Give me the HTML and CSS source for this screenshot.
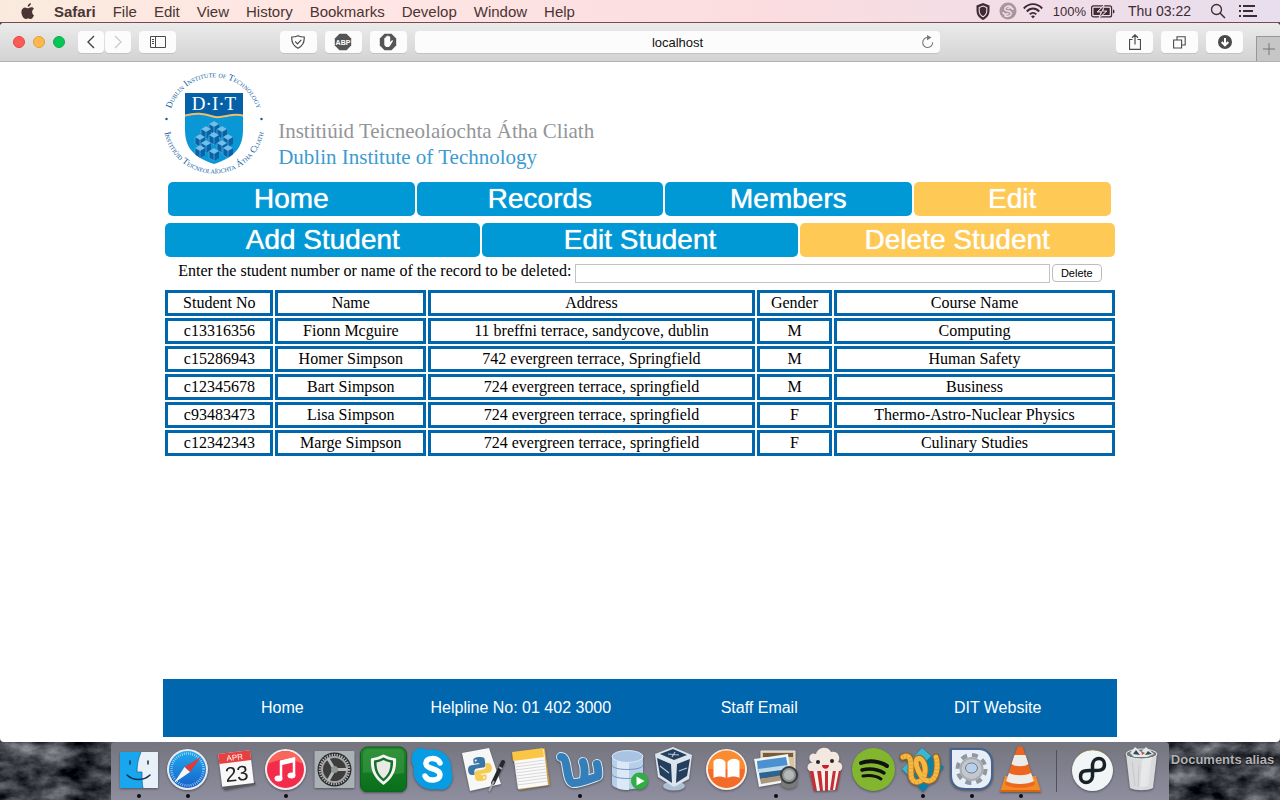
FILE: index.html
```html
<!DOCTYPE html>
<html lang="en">
<head>
<meta charset="utf-8">
<title>Delete Student</title>
<link rel="stylesheet" href="styles.css">
</head>
<body>
<header class="menubar">
  <nav class="menus">
    <svg class="apple" width="14" height="17" viewBox="0 0 14 17"><path fill="#4b3433" d="M9.900 0C10 1.900 8.500 3.700 6.700 3.800 6.500 2.100 8.100.3 9.900 0zM13 12.200c-.9 2.200-2 3.800-3.300 3.800-1 0-1.300-.6-2.500-.6s-1.600.6-2.500.6C2.600 16 .4 12.200.4 9c0-3 1.900-4.600 3.700-4.600 1.200 0 2.100.8 2.900.8.700 0 1.800-.9 3.300-.9 1.100 0 2 .5 2.600 1.400-2.500 1.500-2.100 5.200.1 6.500z"/></svg>
    <button class="menu menu-app">Safari</button>
    <button class="menu">File</button>
    <button class="menu">Edit</button>
    <button class="menu">View</button>
    <button class="menu">History</button>
    <button class="menu">Bookmarks</button>
    <button class="menu">Develop</button>
    <button class="menu">Window</button>
    <button class="menu">Help</button>
  </nav>
  <div class="status">
    <svg width="14" height="17" viewBox="0 0 14 17"><path fill="#3e2a33" d="M7 0l6.500 2.500v5C13.500 12 11 15 7 17 3 15 .5 12 .5 7.500v-5z"/><path fill="none" stroke="#f2dde3" stroke-width="1.100" d="M7 3l3.800 1.500v3.300c0 2.600-1.500 4.700-3.800 6-2.300-1.300-3.800-3.400-3.800-6V4.500z"/></svg>
    <svg width="18" height="18" viewBox="0 0 18 18"><circle cx="9" cy="9" r="8.500" fill="#a8959d"/><path fill="none" stroke="#f2e0e6" stroke-width="1.500" d="M12.500 5C10 3.500 7 4 6 6s1 3 3 3 4 1.500 3 3.500-4 2.500-6.500 1M14 8c0-3-5-2.500-5.500-1M4 10c0 3 5 2.500 5.500 1"/></svg>
    <svg class="wifi" width="20" height="16" viewBox="0 0 20 16"><g fill="none" stroke="#3e2a33" stroke-width="1.900"><path d="M.8 5.500C6-.3 14-.3 19.200 5.500M3.800 8.500c3.600-4 8.800-4 12.400 0M6.800 11.400c1.800-2 4.600-2 6.400 0"/></g><path fill="#3e2a33" d="M10 15.500l-2-2.300c1.200-1.100 2.800-1.100 4 0z"/></svg>
    <span class="charge">100%</span>
    <svg class="battery" width="24" height="13" viewBox="0 0 24 13"><rect x=".6" y=".9" width="20" height="11" rx="2" fill="none" stroke="#3e2a33" stroke-width="1.200"/><rect x="2.500" y="2.800" width="16.200" height="7.200" fill="#3e2a33"/><path fill="#3e2a33" d="M22 4.500c2 .5 2 3.500 0 4z"/><path fill="#f0dde4" stroke="#f0dde4" stroke-width=".8" d="M13 0L6 7h4l-2 6 8-7h-4z"/><path fill="#3e2a33" d="M12.600 1.500L7.500 6.300h4L9 11.500 14.500 6.600h-4z"/></svg>
    <span class="clock">Thu 03:22</span>
    <svg class="search" width="16" height="16" viewBox="0 0 16 16"><circle cx="6.500" cy="6.500" r="5" fill="none" stroke="#3e2a33" stroke-width="1.300"/><path stroke="#3e2a33" stroke-width="1.500" d="M10 10l5 5"/></svg>
    <svg width="18" height="12" viewBox="0 0 18 12"><path stroke="#3e2a33" stroke-width="2" d="M0 1h2M4 1h12M0 6h2M4 6h10M0 11h2M4 11h14"/></svg>
  </div>
</header>

<div class="window">
  <div class="toolbar">
    <div class="tools-left">
      <button class="light red" aria-label="Close"></button>
      <button class="light amber" aria-label="Minimise"></button>
      <button class="light green" aria-label="Zoom"></button>
      <div class="pair">
        <button class="tool narrow" aria-label="Back"><svg width="8" height="14" viewBox="0 0 8 14"><path fill="none" stroke="#444" stroke-width="1.400" d="M7 1L1 7l6 6"/></svg></button>
        <button class="tool narrow" aria-label="Forward"><svg width="8" height="14" viewBox="0 0 8 14"><path fill="none" stroke="#c8c8c8" stroke-width="1.200" d="M1 1l6 6-6 6"/></svg></button>
      </div>
      <button class="tool sidebar" aria-label="Sidebar"><svg width="16" height="12" viewBox="0 0 16 12"><path fill="none" stroke="#4a4a4a" d="M.5.5h15v11H.5zM5.500.5v11M2 3.500h2M2 5.500h2M2 7.500h2"/></svg></button>
    </div>
    <div class="tools-middle">
      <button class="tool" aria-label="Protection"><svg width="14" height="14" viewBox="0 0 14 14"><path fill="none" stroke="#4a4a4a" stroke-width="1.200" d="M7 .7c2 1 4 1.300 6.200 1.300.4 5-1.200 8.800-6.200 11.300C2 10.800.4 7 .8 2 3 2 5 1.700 7 .7zM4.200 6.500l2.300 2.300 3.800-4"/></svg></button>
      <button class="tool" aria-label="Ad block"><svg width="18" height="18" viewBox="0 0 18 18"><path fill="#555" d="M5.500.8h7l4.700 4.700v7l-4.700 4.700h-7L.8 12.500v-7z"/><text x="9" y="11.500" text-anchor="middle" class="abp">ABP</text></svg></button>
      <button class="tool" aria-label="Block content"><svg width="18" height="18" viewBox="0 0 18 18"><path fill="#555" d="M5.500.8h7l4.700 4.700v7l-4.700 4.700h-7L.8 12.500v-7z"/><path fill="#fff" d="M5.300 5.500c0-1 1.300-1 1.300 0V4c0-1 1.500-1 1.500 0v-.8c0-1 1.600-1 1.600 0V4c0-1 1.500-1 1.500 0v5l1.500-1.600c1-.6 1.600.2 1 1l-2.600 4.400c-1.200 2.200-5.800 1.600-5.800-1.500z"/></svg></button>
      <div class="address">
        <input class="url" type="text" value="localhost" aria-label="Address">
        <button class="reload" aria-label="Reload"><svg width="13" height="14" viewBox="0 0 13 14"><path fill="none" stroke="#777" stroke-width="1.100" d="M7 2.500a5 5 0 1 0 4.700 4.700"/><path fill="#777" d="M6 0l4.500 2.600L6 5.200z"/></svg></button>
      </div>
    </div>
    <div class="tools-right">
      <button class="tool" aria-label="Share"><svg width="12" height="16" viewBox="0 0 12 16"><path fill="none" stroke="#4a4a4a" stroke-width="1.200" d="M3.500 5.500h-3v9.800h11V5.500h-3M6 10.500V1M3 3.800L6 .9l3 2.900"/></svg></button>
      <button class="tool" aria-label="Tabs"><svg width="13" height="13" viewBox="0 0 13 13"><path fill="none" stroke="#4a4a4a" stroke-width="1.100" d="M.6 4h8v8h-8zM4 4V.8h8.200V9H9"/></svg></button>
      <button class="tool" aria-label="Downloads"><svg width="14" height="14" viewBox="0 0 14 14"><circle cx="7" cy="7" r="7" fill="#4a4a4a"/><path fill="none" stroke="#fff" stroke-width="2" d="M7 3v7M3.700 7L7 10.300 10.300 7"/></svg></button>
      <button class="newtab" aria-label="New tab"><svg width="12" height="12" viewBox="0 0 12 12"><path stroke="#777" d="M6 0v12M0 6h12"/></svg></button>
    </div>
  </div>

  <main class="page">
    <div class="brand">
      <svg class="crest" width="102" height="102" viewBox="0 0 102 102">
        <defs>
          <path id="ring-top" d="M6.500 57a45 45 0 1 1 89 0"/>
          <path id="ring-bottom" d="M1.500 41a50.500 50.500 0 1 0 99 0"/>
          <clipPath id="shield"><path d="M22 21h58v37c0 17-8 27-29 34C30 85 22 75 22 58z"/></clipPath>
          <g id="block"><path fill="#0a62a6" d="M0 0l5-3 5 3v7l-5 3-5-3z"/><path fill="#6fbfe8" d="M0 0l5-3 5 3-5 3z"/><path fill="none" stroke="#4aa9dc" stroke-width=".8" d="M5 3v7M0 0v7l5 3"/></g>
        </defs>
        <text class="ring ring-upper"><textPath href="#ring-top" startOffset="50%" text-anchor="middle">Dublin Institute of Technology</textPath></text>
        <text class="ring ring-lower"><textPath href="#ring-bottom" startOffset="50%" text-anchor="middle">Institiúid Teicneolaíochta Átha Cliath</textPath></text>
        <circle cx="3.500" cy="47" r="1.200" fill="#0a5a9c"/><circle cx="98.500" cy="47" r="1.200" fill="#0a5a9c"/>
        <g clip-path="url(#shield)">
          <path fill="#0a97d5" d="M22 21h58v72H22z"/>
          <path fill="#0560a8" d="M22 21h58v23c-13-3-17 4-30 1-10-3-17-4-28-1z"/>
          <path fill="none" stroke="#f2bd6c" stroke-width="2" d="M22 43.500c11-3 18-2 28 1s17-4 30-1"/>
          <use href="#block" x="46" y="52"/><use href="#block" x="38" y="57"/><use href="#block" x="54" y="57"/>
          <use href="#block" x="32" y="65"/><use href="#block" x="60" y="65"/><use href="#block" x="46" y="63"/>
          <use href="#block" x="38" y="71"/><use href="#block" x="54" y="71"/><use href="#block" x="32" y="76"/><use href="#block" x="60" y="76"/><use href="#block" x="46" y="79"/>
        </g>
        <text x="51" y="38" text-anchor="middle" class="initials">D·I·T</text>
      </svg>
      <div class="names">
        <p class="irish">Institiúid Teicneolaíochta Átha Cliath</p>
        <p class="english">Dublin Institute of Technology</p>
      </div>
    </div>

    <nav class="tabs tabs-main">
      <a class="tab" href="#">Home</a>
      <a class="tab" href="#">Records</a>
      <a class="tab" href="#">Members</a>
      <a class="tab current" href="#">Edit</a>
    </nav>
    <nav class="tabs tabs-sub">
      <a class="tab" href="#">Add Student</a>
      <a class="tab" href="#">Edit Student</a>
      <a class="tab current" href="#">Delete Student</a>
    </nav>

    <form class="remove" onsubmit="return false">
      <label for="record">Enter the student number or name of the record to be deleted:</label>
      <input class="record" id="record" type="text">
      <button class="delete" type="submit">Delete</button>
    </form>

    <table class="students">
      <colgroup><col class="c-number"><col class="c-name"><col class="c-address"><col class="c-gender"><col class="c-course"></colgroup>
      <thead>
        <tr><th>Student No</th><th>Name</th><th>Address</th><th>Gender</th><th>Course Name</th></tr>
      </thead>
      <tbody>
        <tr><td>c13316356</td><td>Fionn Mcguire</td><td>11 breffni terrace, sandycove, dublin</td><td>M</td><td>Computing</td></tr>
        <tr><td>c15286943</td><td>Homer Simpson</td><td>742 evergreen terrace, Springfield</td><td>M</td><td>Human Safety</td></tr>
        <tr><td>c12345678</td><td>Bart Simpson</td><td>724 evergreen terrace, springfield</td><td>M</td><td>Business</td></tr>
        <tr><td>c93483473</td><td>Lisa Simpson</td><td>724 evergreen terrace, springfield</td><td>F</td><td>Thermo-Astro-Nuclear Physics</td></tr>
        <tr><td>c12342343</td><td>Marge Simpson</td><td>724 evergreen terrace, springfield</td><td>F</td><td>Culinary Studies</td></tr>
      </tbody>
    </table>

    <footer class="footer">
      <a href="#">Home</a>
      <span>Helpline No: 01 402 3000</span>
      <a href="#">Staff Email</a>
      <a href="#">DIT Website</a>
    </footer>
  </main>
</div>

<div class="desktop">
  <svg class="rocks" width="100%" height="100%">
    <filter id="stone" x="0" y="0" width="100%" height="100%" color-interpolation-filters="sRGB">
      <feTurbulence type="fractalNoise" baseFrequency=".03 .05" numOctaves="5" seed="8"/>
      <feColorMatrix values="1 0 0 0 -.28  1 0 0 0 -.27  1 0 0 0 -.24  0 0 0 0 1"/>
    </filter>
    <rect width="100%" height="100%" filter="url(#stone)"/>
  </svg>
  <div class="edge"></div>
  <div class="dock">
    <button class="app running" aria-label="Finder"><svg viewBox="0 0 49 50">
      <path fill="#e9f1f8" d="M6 10h38v36H6z"/><path fill="#18a6ee" d="M6 10h21c-3 7-4 13-4 20h5c0 6 0 11 1 16H6z"/><path fill="none" stroke="#17304a" stroke-width="1.500" stroke-linecap="round" d="M16 19v3M34 19v3M13 33c6 6 17 6 23 0"/><path fill="none" stroke="#0a5f9c" stroke-width=".7" d="M27 10c-3 7-4 13-4 20h5c0 6 0 11 1 16"/></svg></button>
    <button class="app running" aria-label="Safari"><svg viewBox="0 0 49 50">
      <defs><linearGradient id="sky" x2="0" y2="1"><stop stop-color="#22a8ee"/><stop offset="1" stop-color="#1662c8"/></linearGradient></defs>
      <circle cx="24.500" cy="27.500" r="20.500" fill="#e9ebee"/><circle cx="24.500" cy="27.500" r="18.500" fill="url(#sky)"/><circle cx="24.500" cy="27.500" r="16" fill="none" stroke="#cdeaff" stroke-width="2.500" stroke-dasharray=".6 1.500"/><path fill="#e53935" d="M38 15L21.500 25l5.500 5z"/><path fill="#f6f6f6" d="M11 41l10.500-16 5.500 5z"/></svg></button>
    <button class="app" aria-label="Calendar"><svg viewBox="0 0 49 50">
      <path fill="#55585a" d="M9 43l32-5 3 4-31 6z"/><g transform="rotate(-7 24 26)"><path fill="#f8f8f8" d="M8 10h32v33H8z"/><path fill="#e8403e" d="M8 10h32v10H8z"/><text class="cal-month" x="24" y="18" text-anchor="middle">APR</text><text class="cal-day" x="24" y="39" text-anchor="middle">23</text></g></svg></button>
    <button class="app running" aria-label="iTunes"><svg viewBox="0 0 49 50">
      <circle cx="24.500" cy="27.500" r="20.500" fill="#f6ecee"/><circle cx="24.500" cy="27.500" r="18.500" fill="#f42c4c"/><path fill="#f9665c" d="M24.500 9a18.500 18.500 0 0 1 17.500 13c-12-6-23-6-35 0a18.500 18.500 0 0 1 17.500-13z"/><path fill="none" stroke="#fff" stroke-width="2.500" d="M20 36V20l13-3v16"/><path fill="#fff" d="M19 18.500l15-3.500v5l-15 3.500z"/><ellipse cx="17.500" cy="36.500" rx="4" ry="3" fill="#fff"/><ellipse cx="30.500" cy="33.500" rx="4" ry="3" fill="#fff"/></svg></button>
    <button class="app" aria-label="System Preferences"><svg viewBox="0 0 49 50">
      <rect x="4.500" y="9" width="40" height="37" rx="1" fill="#aab2b6"/><circle cx="24.500" cy="27.500" r="17" fill="#292b2d"/><circle cx="24.500" cy="27.500" r="14.500" fill="none" stroke="#b7b7b5" stroke-width="2.500" stroke-dasharray="1.300 1.200"/><circle cx="24.500" cy="27.500" r="12.500" fill="#3b3d3e" stroke="#a7a8a6" stroke-width="2"/><path stroke="#b9bab8" stroke-width="3" d="M24.500 27.500l13 0M24.500 27.500l-6.500-11M24.500 27.500L18 39"/><circle cx="24.500" cy="27.500" r="3.500" fill="#929695"/></svg></button>
    <button class="app" aria-label="AdGuard"><svg viewBox="0 0 49 50">
      <defs><linearGradient id="leaf" x2="0" y2="1"><stop stop-color="#218431"/><stop offset="1" stop-color="#087018"/></linearGradient></defs>
      <rect x="1.500" y="5" width="46" height="45" rx="7" fill="url(#leaf)" stroke="#145f1e"/><path fill="#3f9f45" opacity=".5" d="M4 31c12-2 29 3 41 0V12c-1-4-3-5-6-5H10c-4 0-5 2-6 5z"/><path fill="#f4f4f4" d="M24.500 12.500c4 2 8 3 12.500 4 1 13-4 20-12.500 26.500C16 36.500 11 29.500 12 16.500c4.500-1 8.500-2 12.500-4z"/><path fill="#167026" d="M24.500 15.500c3 1.500 6 2.500 9.500 3 .5 10-3 16-9.500 21-6.500-5-10-11-9.500-21 3.500-.5 6.500-1.500 9.500-3z"/><path fill="#e9e9e7" d="M24.500 18c2 1 4.500 2 7 2.500 0 7-2 12-7 16-5-4-7-9-7-16 2.500-.5 5-1.500 7-2.500z"/></svg></button>
    <button class="app" aria-label="Skype"><svg viewBox="0 0 49 50">
      <path fill="#079de5" d="M4 16C3 8 12 3 19 8c14-3 26 7 24 21 5 10-4 22-14 18-14 3-26-8-23-22-2-3-3-6-2-9z"/><path fill="none" stroke="#fff" stroke-width="5.500" stroke-linecap="round" d="M32 21c-3-6-15-6-14 1 1 6 14 4 14 11 0 6-12 7-15 1"/></svg></button>
    <button class="app" aria-label="Python"><svg viewBox="0 0 49 50">
      <defs><path id="snake" d="M12 0C7 0 6.500 1.500 6.500 3v3H12v1H4C1 7 0 9.500 0 12s1 5 4 5h2v-3c0-2 1.500-3 3-3h6c2 0 3-1 3-3V3c0-2-2-3-6-3z"/></defs>
      <path fill="#f7f7f7" d="M5 11l27-5 12 36-31 7z"/><g transform="translate(11 15) rotate(-8 12 12)"><use href="#snake" fill="#3b76a6"/><use href="#snake" fill="#f6cc54" transform="rotate(180 12 12)"/><circle cx="9" cy="3" r="1" fill="#fff"/><circle cx="15" cy="21" r="1" fill="#fff"/></g><path stroke="#24272b" stroke-width="4" stroke-linecap="round" d="M46 20L36 41"/><path stroke="#a6a9ac" stroke-width="2" d="M37 39l-5 10M42 25l3 2"/></svg></button>
    <button class="app" aria-label="Notes"><svg viewBox="0 0 49 50">
      <path fill="#c69a42" d="M8 12l31-6 5 37-31 5z"/><path fill="#fafafa" d="M7 11l31-4 4 36-30 4z"/><path fill="#fbc644" d="M6 10l31-4 1 9-31 4z"/><path stroke="#c9c9ca" stroke-width=".7" d="M9 22l30-4M9 25l30-4M9 28l31-4M9 31l31-4M10 34l31-4M10 37l31-4M10 40l31-4M11 43l31-4"/></svg></button>
    <button class="app running" aria-label="Word"><svg viewBox="0 0 49 50">
      <defs><path id="swoosh" d="M6 15c8 0 4 24 12 26 8 0 10-2 23-6M28 20c2 5 2 11 1 17M42 22c1 4 2 8 1 12" stroke-linecap="round" stroke-linejoin="round"/></defs>
      <use href="#swoosh" fill="none" stroke="#d8eaf5" stroke-width="10"/><use href="#swoosh" fill="none" stroke="#347fb9" stroke-width="8"/></svg></button>
    <button class="app" aria-label="Database"><svg viewBox="0 0 49 50">
      <path fill="#b7cfe8" d="M8 15v27c0 7 31 7 31 0V15z"/><path fill="#dbe9f7" d="M13 18v28c4 2 8 2 12 2V18z"/><ellipse cx="23.500" cy="14.500" rx="15.500" ry="6" fill="#a8c4e2" stroke="#dcebfa"/><path fill="none" stroke="#6f92bc" d="M8 23c0 6 31 6 31 0M8 32c0 6 31 6 31 0"/><circle cx="35.500" cy="39" r="8.500" fill="#2faf42"/><path fill="#fff" d="M32.500 34.500l8 4.500-8 4.500z"/></svg></button>
    <button class="app" aria-label="VirtualBox"><svg viewBox="0 0 49 50">
      <ellipse cx="21" cy="44" rx="11" ry="4.500" fill="#aebfd2"/><path fill="#dce5ed" d="M2 12L20 5l19 8-3 24-15 8-16-10z"/><path fill="#243f5e" d="M7 12l13-5 14 6-13 5zM4 16l14 6 1 19-12-8zM37 17l-13 5-1 19 11-7z"/><path fill="none" stroke="#b8c8d9" stroke-width="1.200" d="M15 12l11 1M22 10l-3 5M7 24l9 7M26 29l8-3"/></svg></button>
    <button class="app" aria-label="Books"><svg viewBox="0 0 49 50">
      <circle cx="24.500" cy="27.500" r="20.500" fill="#f7eee5"/><circle cx="24.500" cy="27.500" r="18.500" fill="#f36b28"/><path fill="#fa8b31" d="M6 27a18.500 18.500 0 0 1 37 0z"/><path fill="#fff" d="M23.500 20c-3-4-9-4-12-1v17c3-2 9-2 12 0zM25.500 20c3-4 9-4 12-1v17c-3-2-9-2-12 0z"/></svg></button>
    <button class="app running" aria-label="Preview"><svg viewBox="0 0 49 50">
      <path fill="#dac5a0" stroke="#eee" d="M10 9h34v28H10z"/><path fill="#745c43" d="M12 11h30v4H12z"/><path fill="#f2f5f7" d="M3 17l34-5 4 27-33 6z"/><path fill="#4c91cf" d="M6 19l29-4 2 10-30 5z"/><path fill="#bcdcec" d="M7 27l30-4 1 4-30 5z"/><path fill="#2f638e" d="M8 31l30-4 1 6-30 4z"/><path fill="#aa987a" d="M9 37l29-5 1 5-29 5z"/><path fill="#777a78" d="M30 34h16v9c-4 5-12 5-16 0z"/><circle cx="38" cy="33" r="8" fill="#8f9491" stroke="#3a3b3c" stroke-width="2"/><circle cx="38" cy="33" r="5" fill="#b3b9b9"/></svg></button>
    <button class="app" aria-label="Popcorn Time"><svg viewBox="0 0 49 50">
      <path fill="#f7f4ec" d="M9 27l31 1-4 20-21 1z"/><path fill="#c42e36" d="M9 27h4l4 22h-3zM17 28h4l2 21h-3zM25 28h3v21h-3zM33 28h3l-3 20h-3zM39 28h2l-4 20h-2z"/><path fill="#f2e8e0" d="M10 29c-5-2-2-10 3-8-7-3-3-12 3-9 2-8 13-8 15-2 8-2 10 7 7 10 6 1 5 9 1 9z"/><circle cx="18" cy="20" r="2" fill="#292323"/><circle cx="32" cy="19" r="2" fill="#292323"/><path fill="#cb1f29" d="M22 23h7c0 5-7 5-7 0z"/></svg></button>
    <button class="app" aria-label="Spotify"><svg viewBox="0 0 49 50">
      <circle cx="24.500" cy="27.500" r="21.500" fill="#83b62f"/><path fill="none" stroke="#111" stroke-width="4" stroke-linecap="round" d="M12 21c8-3 19-2 26 3"/><path fill="none" stroke="#111" stroke-width="3.500" stroke-linecap="round" d="M13 28c8-2 15-1 22 3"/><path fill="none" stroke="#111" stroke-width="3" stroke-linecap="round" d="M14 34c7-1 12-1 18 3"/></svg></button>
    <button class="app running" aria-label="TextWrangler"><svg viewBox="0 0 49 50">
      <path fill="#0782ad" d="M24 6l22 19-21 25L4 27z"/><path fill="#38b7d3" d="M24 6l9 8L12 35l-8-8z"/><g fill="none" stroke-linecap="round"><path stroke="#9b641b" stroke-width="7" d="M5 15c9-4 8 6 8 17 0 12 13 10 14-2 1-10-5-16-8-13-3 5 4 22 12 22 9-1 9-18 7-24"/><path stroke="#f5b842" stroke-width="5" d="M5 15c9-4 8 6 8 17 0 12 13 10 14-2 1-10-5-16-8-13-3 5 4 22 12 22 9-1 9-18 7-24"/></g><path fill="none" stroke="#d99a38" stroke-width="5" stroke-dasharray=".6 3" d="M5 15c9-4 8 6 8 17 0 12 13 10 14-2M31 39c9-1 9-18 7-24"/></svg></button>
    <button class="app running" aria-label="Utility"><svg viewBox="0 0 49 50">
      <path fill="#e8eef7" stroke="#46658e" stroke-width="2" d="M4 7h28c8 0 13 6 13 14v12c0 9-6 14-14 14H19C9 47 4 42 4 33z"/><circle cx="24.500" cy="27" r="12" fill="#a8adb5"/><circle cx="24.500" cy="27" r="14" fill="none" stroke="#9097a0" stroke-width="4" stroke-dasharray="6 5"/><circle cx="24.500" cy="27" r="10" fill="#c4c8cd"/><ellipse cx="24.500" cy="26" rx="6" ry="5" fill="#b8d1ec" stroke="#6e7c8d"/></svg></button>
    <button class="app running" aria-label="VLC"><svg viewBox="0 0 49 50">
      <path fill="#f18a22" d="M9 34h31l5 16H4z"/><path fill="#d96313" d="M4 48h41v2H4z"/><path fill="#ee651d" d="M21 6c0-2 6-2 6 0l12 36c-4 5-26 5-30 0z"/><path fill="#ececea" d="M18.500 13h11l3 9c-4 3-13 3-17 0zM13 31c6 3 16 3 22 0l3 8c-6 4-22 4-28 0z"/></svg></button>
    <span class="divider"></span>
    <button class="app" aria-label="Infinity"><svg viewBox="0 0 49 50">
      <circle cx="24.500" cy="28.500" r="20.500" fill="#f2f5f6"/><path fill="none" stroke="#8f8151" d="M10 13c8-7 21-7 29 0"/><path fill="none" stroke="#172126" stroke-width="3.500" stroke-linecap="round" d="M24.500 28.500c-5 0-12-1-12 6 0 8 11 8 12 0v-12c1-8 12-8 12 0 0 7-7 6-12 6z"/></svg></button>
    <button class="app" aria-label="Trash"><svg viewBox="0 0 49 50">
      <path fill="#d8dadb" d="M9 12l31 0-4 34c-5 3-18 3-23 0z"/><ellipse cx="24.500" cy="12" rx="15.500" ry="5" fill="#737a7e" stroke="#eceeef"/><path fill="#e5e7e8" d="M13 11l5-6 6 5 5-5 8 7-7 3H17z"/><path fill="#344b57" d="M19 8l4 5-7-1zM31 9l4 3-7 1z"/><path fill="#b85b3f" d="M24 9l4 2-3 2z"/><path fill="none" stroke="#c6c9ca" d="M15 19l3 25M22 23l-1 22M34 19l-5 24"/><path fill="#f1f1f1" opacity=".6" d="M25 18l10-3-4 29-8 1z"/></svg></button>
  </div>
  <div class="edge"><span class="alias">Documents alias</span></div>
</div>
</body>
</html>
```
FILE: styles.css
```css
* { box-sizing: border-box; }

body {
  margin: 0;
  min-height: 100vh;
  display: flex;
  flex-direction: column;
  background: #4c3a40;
  font-family: "Liberation Sans", Arial, sans-serif;
}

button { border: 0; padding: 0; background: none; font: inherit; color: inherit; }
a { color: inherit; text-decoration: none; }
svg { display: block; flex: none; }

/* Menu bar */
.menubar {
  height: 23px;
  display: flex;
  justify-content: space-between;
  align-items: center;
  padding: 0 23px 0 21px;
  border-bottom: 1px solid #754b4f;
  background: linear-gradient(90deg, #faeadd 0%, #ffe6e4 25%, #fbdde0 60%, #e8deee 100%);
  color: #4b3433;
  font-size: 15px;
}
.menus { display: flex; align-items: center; gap: 17px; }
.apple { margin-right: 2px; }
.menu-app { font-weight: bold; }
.status { display: flex; align-items: center; gap: 9px; color: #3e2a33; }
.wifi { margin-left: -3px; }
.charge { font-size: 13px; margin-left: 1px; }
.battery { margin-left: -4px; }
.clock { margin-left: 4px; font-size: 14px; }
.search { margin: 0 4px 0 10px; }

/* Browser window */
.window {
  flex: 1;
  display: flex;
  flex-direction: column;
  background: #fff;
  border-radius: 4px;
  overflow: hidden;
}
.toolbar {
  height: 39px;
  display: flex;
  align-items: center;
  border-bottom: 1px solid #b1b1b1;
  background: linear-gradient(#ebebeb, #d3d3d3);
}
.tools-left { flex: 267 1 0; display: flex; align-items: center; gap: 8px; padding-left: 13px; }
.tools-middle { width: 51.6%; display: flex; gap: 8px; }
.tools-right { flex: 340 1 0; align-self: stretch; display: flex; align-items: center; justify-content: flex-end; gap: 8px; }
.light { width: 12px; height: 12px; border-radius: 50%; }
.red { background: #fc5b57; border: 1px solid #e2463f; }
.amber { background: #fdb94b; border: 1px solid #e0a03a; }
.green { background: #06c755; border: 1px solid #10ad45; }
.pair { display: flex; gap: 1px; margin-left: 5px; }
.tool {
  width: 37px;
  height: 22px;
  display: flex;
  align-items: center;
  justify-content: center;
  border-radius: 4px;
  background: #fcfcfc;
  box-shadow: 0 1px 0 #c2c2c2;
}
.narrow { width: 26px; }
.abp { font: bold 7px "Liberation Sans", Arial, sans-serif; fill: #fff; }
.address { position: relative; flex: 1; }
.url {
  display: block;
  width: 100%;
  height: 22px;
  border: 0;
  border-radius: 4px;
  padding: 1px 24px 0;
  background: #fcfcfc;
  box-shadow: 0 1px 0 #c2c2c2;
  text-align: center;
  color: #111;
  font: 13px "Liberation Sans", Arial, sans-serif;
}
.reload { position: absolute; right: 6px; top: 4px; }
.newtab {
  align-self: flex-end;
  width: 24px;
  height: 25px;
  margin-left: 5px;
  display: flex;
  align-items: center;
  justify-content: center;
  border: 1px solid #979797;
  border-width: 1px 0 0 1px;
  background: #c6c6c6;
}

/* Page */
.page { flex: 1; width: 74.5%; margin: 0 auto; display: flex; flex-direction: column; }
.brand { display: flex; padding-top: 10px; gap: 13px; }
.crest { overflow: visible; }
.names { padding-top: 46px; font-family: "Liberation Serif", "Times New Roman", serif; font-size: 21px; line-height: 26px; }
.names p { margin: 0; }
.irish { color: #939597; }
.english { color: #3c9bd0; }
.ring { fill: #0a5a9c; font-family: "Liberation Serif", serif; font-size: 9px; font-variant: small-caps; }
.initials { fill: #fff; font: 19px "Liberation Serif", serif; }

.tabs { display: grid; gap: 2px; }
.tabs-main { grid-template-columns: 5fr 5fr 5fr 4fr; margin: 8px 6px 0 5px; }
.tabs-sub { grid-template-columns: 1fr 1fr 1fr; margin: 7px 2px 0; }
.tab {
  height: 34px;
  border-radius: 5px;
  background: #0099d6;
  color: #fff;
  text-align: center;
  font-size: 28px;
  line-height: 34px;
  text-shadow: 0 0 1px #fff;
}
.tab.current { background: #ffc955; }

.remove {
  display: flex;
  align-items: center;
  gap: 2px;
  margin: 4px 15px 0;
  height: 24px;
  font-family: "Liberation Serif", "Times New Roman", serif;
  font-size: 16px;
  line-height: 18px;
}
.remove label { margin: 0 2px 4px 0; }
.record { flex: 1; min-width: 0; height: 19px; border: 1px solid #c3c3c3; padding: 1px; background: #fff; }
.delete {
  width: 50px;
  height: 18px;
  border: 1px solid #bdbdbd;
  border-radius: 4px;
  background: #fff;
  color: #000;
  font: 11px "Liberation Sans", Arial, sans-serif;
}

.students {
  width: 100%;
  margin-top: 3px;
  table-layout: fixed;
  border-spacing: 2px;
  font-family: "Liberation Serif", "Times New Roman", serif;
  font-size: 16px;
  line-height: 18px;
  text-align: center;
}
.students th, .students td { border: 3px solid #0066ae; padding: 1px; font-weight: normal; }
.c-number { width: 11.5%; }
.c-name { width: 16%; }
.c-address { width: 34.7%; }
.c-gender { width: 8%; }

.footer {
  margin: auto 0 5px;
  height: 58px;
  display: grid;
  grid-template-columns: repeat(4, 1fr);
  align-items: center;
  text-align: center;
  background: #0066ae;
  color: #fff;
  font-size: 16px;
}

/* Desktop and dock */
.desktop { position: relative; height: 58px; display: flex; overflow: hidden; }
.rocks { position: absolute; left: 0; top: 0; }
.edge { position: relative; flex: 1; padding: 8px 4px 0 0; text-align: center; }
.alias { color: #b2b2b4; font-size: 13px; font-weight: bold; line-height: 14px; white-space: nowrap; text-shadow: 0 1px 2px #000; }
.dock {
  position: relative;
  display: flex;
  padding: 0 3px;
  border-radius: 4px 4px 0 0;
  background: linear-gradient(#74757e, #8e8e9f);
}
.app { width: 49px; height: 58px; }
.app svg { width: 49px; height: 50px; filter: drop-shadow(0 1px 1px #0006); }
.app::after { content: ""; display: block; width: 4px; height: 4px; margin: 2px auto; border-radius: 50%; }
.running::after { background: #0c0c10; }
.divider { width: 1px; height: 42px; margin: 8px 11px; background: #50515b; }
.cal-month { fill: #fff; font: 8px "Liberation Sans", Arial, sans-serif; }
.cal-day { fill: #222; font: 21px "Liberation Sans", Arial, sans-serif; }
```
